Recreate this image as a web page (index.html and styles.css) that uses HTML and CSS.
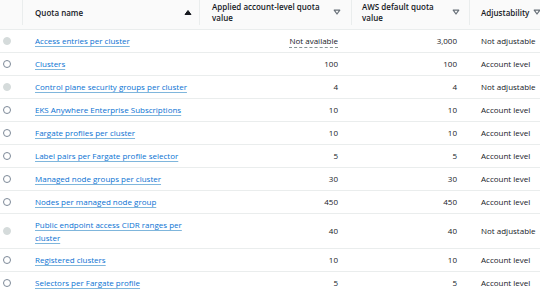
FILE: index.html
```html
<!DOCTYPE html>
<html lang="en">
<head>
    <meta charset="UTF-8">
    <title>Service quotas</title>
    <link rel="stylesheet" href="styles.css">
</head>
<body>
    <table class="quotas">
        <colgroup>
            <col class="c-sel">
            <col class="c-name">
            <col class="c-applied">
            <col class="c-default">
            <col class="c-adj">
        </colgroup>
        <thead>
            <tr>
                <th class="sel"></th>
                <th><div class="th-in"><span>Quota name</span><svg class="sort" viewBox="0 0 8 8"><path d="M1 6.5 4 2.5 7 6.5Z" fill="#16191f" stroke="#16191f" stroke-width="1" stroke-linejoin="round"/></svg></div></th>
                <th class="applied"><div class="th-in"><span>Applied account-level quota value</span><svg class="sort" viewBox="0 0 8 8"><path d="M1.2 2.2 4 6 6.8 2.2Z" fill="none" stroke="#687078" stroke-width="1.2" stroke-linejoin="round"/></svg></div></th>
                <th class="default"><div class="th-in"><span>AWS default quota value</span><svg class="sort" viewBox="0 0 8 8"><path d="M1.2 2.2 4 6 6.8 2.2Z" fill="none" stroke="#687078" stroke-width="1.2" stroke-linejoin="round"/></svg></div></th>
                <th class="last"><div class="th-in"><span>Adjustability</span><svg class="sort" viewBox="0 0 8 8"><path d="M1.2 2.2 4 6 6.8 2.2Z" fill="none" stroke="#687078" stroke-width="1.2" stroke-linejoin="round"/></svg></div></th>
            </tr>
        </thead>
        <tbody>
            <tr>
                <td class="sel"><span class="radio off"></span></td>
                <td><a href="#">Access entries per cluster</a></td>
                <td class="num"><span class="na">Not available</span></td>
                <td class="num">3,000</td>
                <td>Not adjustable</td>
            </tr>
            <tr>
                <td class="sel"><span class="radio"></span></td>
                <td><a href="#">Clusters</a></td>
                <td class="num">100</td>
                <td class="num">100</td>
                <td>Account level</td>
            </tr>
            <tr>
                <td class="sel"><span class="radio off"></span></td>
                <td><a href="#">Control plane security groups per cluster</a></td>
                <td class="num">4</td>
                <td class="num">4</td>
                <td>Not adjustable</td>
            </tr>
            <tr>
                <td class="sel"><span class="radio"></span></td>
                <td><a href="#">EKS Anywhere Enterprise Subscriptions</a></td>
                <td class="num">10</td>
                <td class="num">10</td>
                <td>Account level</td>
            </tr>
            <tr>
                <td class="sel"><span class="radio"></span></td>
                <td><a href="#">Fargate profiles per cluster</a></td>
                <td class="num">10</td>
                <td class="num">10</td>
                <td>Account level</td>
            </tr>
            <tr>
                <td class="sel"><span class="radio"></span></td>
                <td><a href="#">Label pairs per Fargate profile selector</a></td>
                <td class="num">5</td>
                <td class="num">5</td>
                <td>Account level</td>
            </tr>
            <tr>
                <td class="sel"><span class="radio"></span></td>
                <td><a href="#">Managed node groups per cluster</a></td>
                <td class="num">30</td>
                <td class="num">30</td>
                <td>Account level</td>
            </tr>
            <tr>
                <td class="sel"><span class="radio"></span></td>
                <td><a href="#">Nodes per managed node group</a></td>
                <td class="num">450</td>
                <td class="num">450</td>
                <td>Account level</td>
            </tr>
            <tr class="tall">
                <td class="sel"><span class="radio off"></span></td>
                <td><a href="#">Public endpoint access CIDR ranges per cluster</a></td>
                <td class="num">40</td>
                <td class="num">40</td>
                <td>Not adjustable</td>
            </tr>
            <tr>
                <td class="sel"><span class="radio"></span></td>
                <td><a href="#">Registered clusters</a></td>
                <td class="num">10</td>
                <td class="num">10</td>
                <td>Account level</td>
            </tr>
            <tr>
                <td class="sel"><span class="radio"></span></td>
                <td><a href="#">Selectors per Fargate profile</a></td>
                <td class="num">5</td>
                <td class="num">5</td>
                <td>Account level</td>
            </tr>
        </tbody>
    </table>
</body>
</html>
```
FILE: styles.css
```css
*{
    margin:0;
    padding:0;
    box-sizing:border-box;
}
body{
    background:#fff;
    font-family:"Open Sans","Noto Sans",sans-serif;
    font-size:8px;
    color:#16191f;
}
table.quotas{
    width:540px;
    table-layout:fixed;
    border-collapse:collapse;
}
col.c-sel{ width:23px; }
col.c-name{ width:177px; }
col.c-applied{ width:152px; }
col.c-default{ width:118px; }
col.c-adj{ width:70px; }

/* header */
thead th{
    height:29px;
    background:#fafafa;
    font-weight:600;
    text-align:left;
    line-height:11px;
    position:relative;
    vertical-align:middle;
    padding:0 8px 4px 12px;
}
thead th::after{
    content:"";
    position:absolute;
    right:0;
    top:0;
    bottom:4px;
    border-right:1px solid #eaeded;
}
thead th.last::after{ display:none; }
thead th.sel{ padding:0; }
.th-in{
    display:flex;
    align-items:center;
    justify-content:space-between;
    gap:4px;
}
.th-in span{ flex:1; }
thead th.applied{ padding-right:11px; }
thead th.default{ padding-left:10px; padding-right:10px; }
thead th.default .th-in span{ padding-right:12px; }
thead th.last{ padding-left:11px; padding-right:3px; }

svg.sort{
    width:8px;
    height:8px;
    flex:none;
}

/* body */
tbody td{
    height:23px;
    border-top:1px solid #eaeded;
    padding:0 12px;
    vertical-align:middle;
    line-height:13px;
    white-space:nowrap;
}
tbody tr.tall td{
    height:35px;
    white-space:normal;
}
tbody td.sel{
    padding:0 0 0 3px;
}
tbody td.num{
    text-align:right;
    padding-right:14px;
}
tbody td:nth-child(4){ padding-right:13px; }
tbody td:nth-child(5){ padding-left:11px; padding-right:0; }

a{
    color:#0972d3;
    text-decoration:underline;
    text-decoration-color:#7fb6dc;
    text-underline-offset:2px;
}
span.na{
    border-bottom:1px dashed #879596;
    padding-bottom:1px;
}
span.radio{
    display:block;
    width:8px;
    height:8px;
    border-radius:50%;
    border:1px solid #7d8998;
}
span.radio.off{
    border-color:#d5dbdb;
    background:#d5dbdb;
}
```
